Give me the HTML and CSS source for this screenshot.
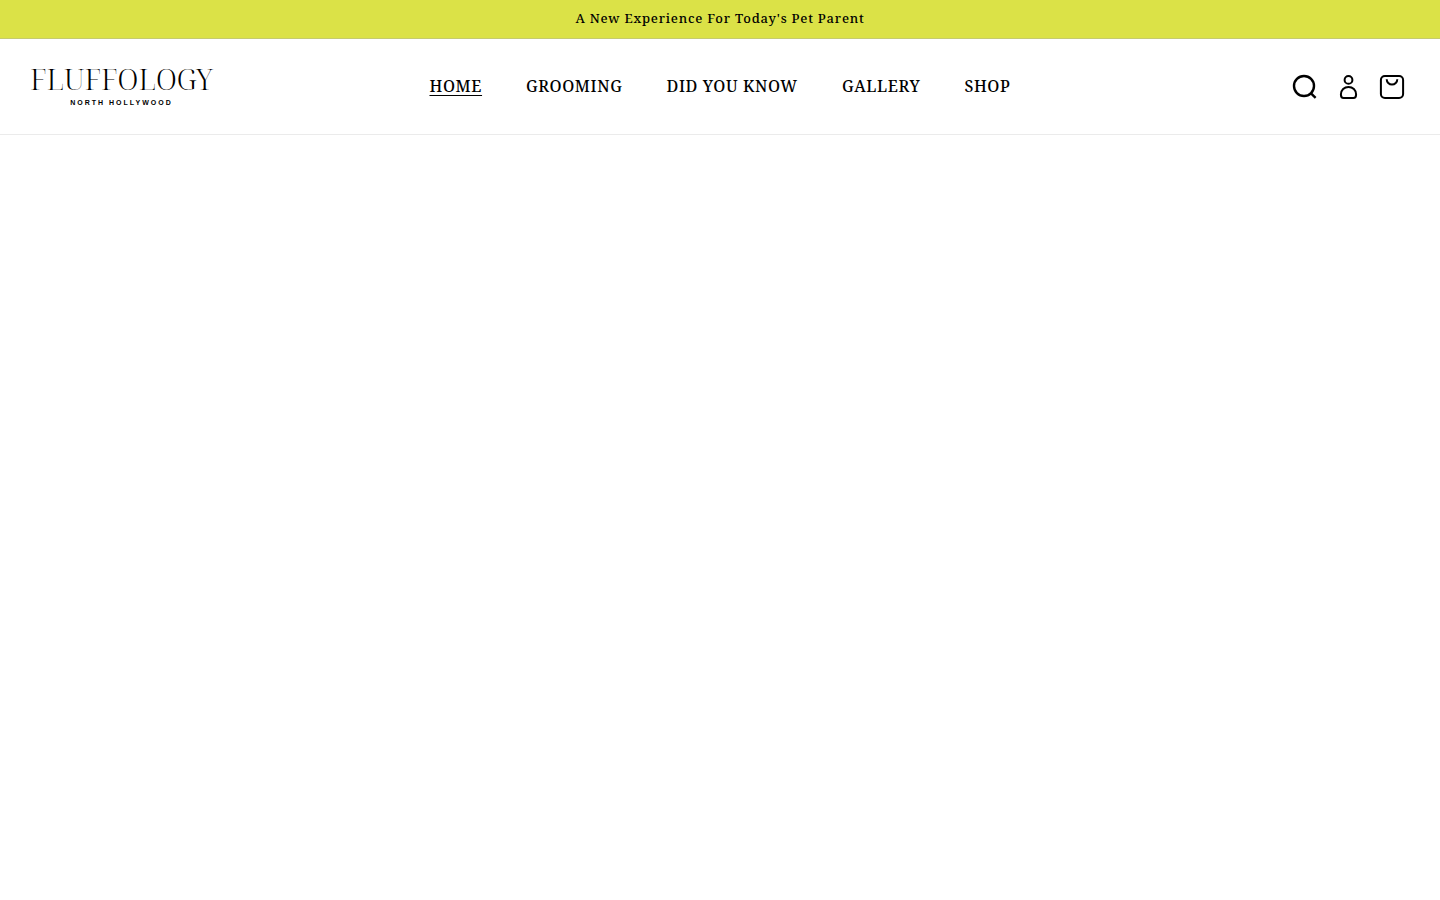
FILE: index.html
```html
<!DOCTYPE html>
<html lang="en">
<head>
<meta charset="UTF-8">
<title>Fluffology</title>
	<link rel="stylesheet" href="styles.css">
</head>
<body>
	<div class="announcement">
		<p>A New Experience For Today's Pet Parent</p>
	</div>

	<header class="header">
		<a href="#" class="logo">
			<span class="logo-name">FLUFFOLOGY</span>
			<span class="logo-place">NORTH HOLLYWOOD</span>
		</a>

		<nav class="menu">
			<a href="#" class="active">HOME</a>
			<a href="#">GROOMING</a>
			<a href="#">DID YOU KNOW</a>
			<a href="#">GALLERY</a>
			<a href="#">SHOP</a>
		</nav>

		<div class="icons">
			<button type="button" aria-label="Search">
				<svg class="search" width="26" height="26" viewBox="0 0 26 26"><circle cx="13" cy="12" r="10"/><path d="M20 19.3l4.6 4.5"/></svg>
			</button>
			<a href="#" aria-label="Log in">
				<svg width="26" height="26" viewBox="0 0 26 26"><circle cx="13.5" cy="5.9" r="3.9"/><path d="M5.9 20.5c0-4.5 3.4-7.5 7.6-7.5s7.6 3 7.6 7.5q0 3.5-2.7 3.5H8.6q-2.7 0-2.7-3.5z"/></svg>
			</a>
			<a href="#" aria-label="Cart">
				<svg width="26" height="26" viewBox="0 0 26 26"><rect x="1.9" y="2" width="22.2" height="22" rx="4"/><path d="M7.7 5.2a5.3 5.3 0 0 0 10.6 0"/></svg>
			</a>
		</div>
	</header>

	<main></main>
</body>
</html>
```
FILE: styles.css
```css
body{
	margin: 0;
	background-color: #fff;
	color: #000;
	font-family: "Noto Serif", "Droid Serif", serif;
}
.announcement{
	background-color: #dbe247;
	border-bottom: 1px solid #c5cb70;
	text-align: center;
}
.announcement p{
	margin: 0;
	padding-bottom: 2px;
	font-size: 13px;
	line-height: 36px;
	font-weight: 500;
	letter-spacing: 0.06em;
}
.header{
	display: grid;
	grid-template-columns: 1fr auto 1fr;
	align-items: center;
	height: 95px;
	padding: 0 30px;
	border-bottom: 1px solid #ebebeb;
}
.header a{
	color: #000;
	text-decoration: none;
}
.logo{
	display: flex;
	flex-direction: column;
	align-items: center;
	justify-self: start;
}
.logo-name{
	font-family: "Noto Serif Display", "Liberation Serif", serif;
	font-size: 29px;
	line-height: 28px;
	font-weight: 300;
}
.logo-place{
	padding-top: 4px;
	font-family: "Liberation Sans", sans-serif;
	font-size: 7px;
	line-height: 12px;
	font-weight: bold;
	letter-spacing: 2px;
}
.menu{
	display: flex;
	gap: 44px;
	padding-bottom: 2px;
	font-size: 16px;
	line-height: 24px;
	font-weight: 500;
	letter-spacing: 0.04em;
}
.header .active{
	text-decoration: underline;
	text-underline-offset: 3px;
}
.icons{
	display: flex;
	justify-self: end;
	gap: 18px;
	padding-right: 5px;
}
.icons a,
.icons button{
	display: block;
	padding: 0;
	border: 0;
	background: none;
	height: 26px;
}
.icons svg{
	display: block;
	fill: none;
	stroke: #000;
	stroke-width: 2;
}
.icons .search{
	stroke-width: 2.4;
}
```
